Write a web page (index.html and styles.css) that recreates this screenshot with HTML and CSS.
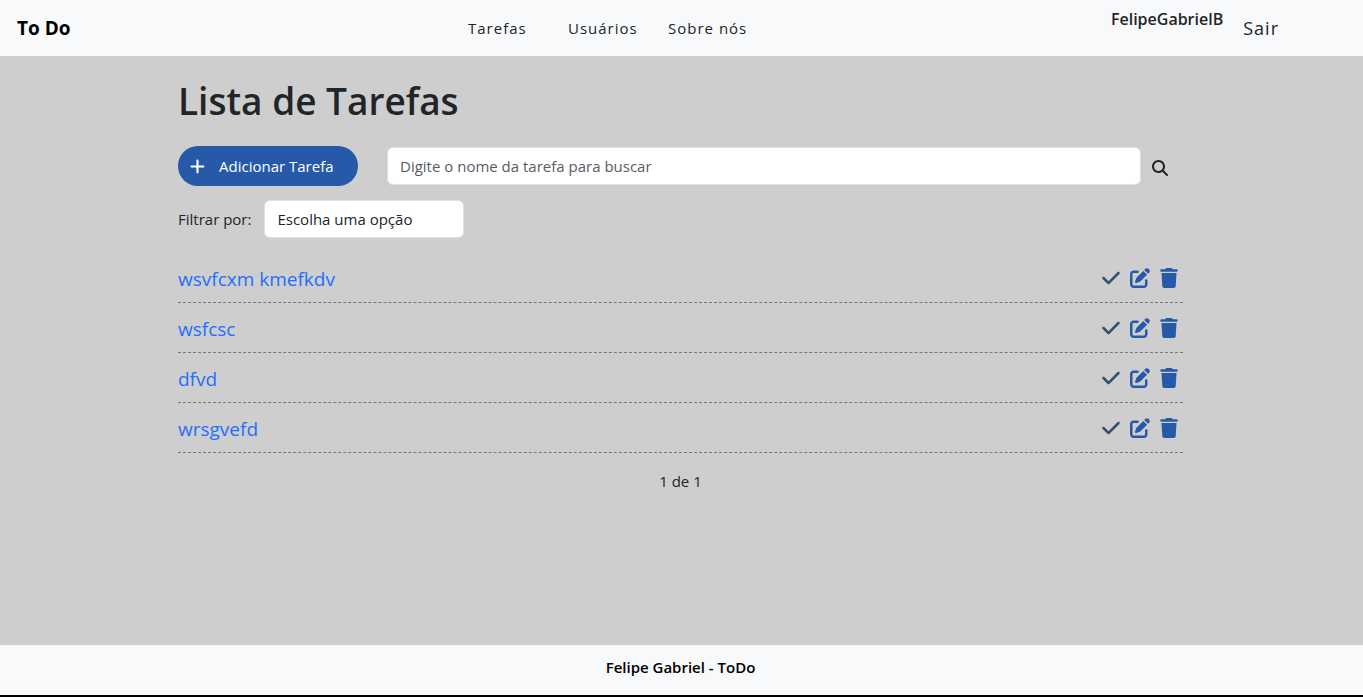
FILE: index.html
```html
<!DOCTYPE html>
<html lang="pt-BR">
<head>
<meta charset="utf-8">
<meta name="viewport" content="width=device-width, initial-scale=1">
<title>To Do</title>
<link rel="stylesheet" href="styles.css">
</head>
<body class="page">
<svg class="sprite" aria-hidden="true">
  <symbol id="check" viewBox="0 0 448 512"><path d="M438.600 105.400c12.500 12.500 12.500 32.800 0 45.300l-256 256c-12.500 12.500-32.800 12.500-45.300 0l-128-128c-12.500-12.500-12.500-32.800 0-45.300s32.800-12.500 45.300 0L160 338.700 393.400 105.400c12.500-12.500 32.800-12.500 45.300 0z"/></symbol>
  <symbol id="edit" viewBox="0 0 512 512"><path d="M471.600 21.700c-21.900-21.900-57.300-21.900-79.200 0L362.300 51.700l97.900 97.900 30.100-30.100c21.900-21.900 21.900-57.300 0-79.200L471.600 21.700zm-299.200 220c-6.100 6.100-10.800 13.600-13.500 21.900l-29.600 88.800c-2.900 8.600-.6 18.100 5.800 24.600s15.900 8.700 24.600 5.800l88.800-29.600c8.200-2.700 15.700-7.400 21.900-13.500L437.700 172.300 339.700 74.300 172.400 241.700zM96 64C43 64 0 107 0 160V416c0 53 43 96 96 96H352c53 0 96-43 96-96V320c0-17.700-14.300-32-32-32s-32 14.300-32 32v96c0 17.700-14.300 32-32 32H96c-17.700 0-32-14.300-32-32V160c0-17.700 14.300-32 32-32h96c17.700 0 32-14.300 32-32s-14.300-32-32-32H96z"/></symbol>
  <symbol id="trash" viewBox="0 0 448 512"><path d="M135.200 17.700L128 32H32C14.300 32 0 46.300 0 64S14.300 96 32 96H416c17.700 0 32-14.300 32-32s-14.300-32-32-32H320l-7.200-14.300C307.400 6.800 296.300 0 284.200 0H163.800c-12.100 0-23.200 6.800-28.600 17.700zM416 128H32L53.200 467c1.600 25.300 22.600 45 47.900 45H346.900c25.300 0 46.300-19.700 47.900-45L416 128z"/></symbol>
  <symbol id="search" viewBox="0 0 512 512"><path d="M416 208c0 45.900-14.900 88.300-40 122.700L502.600 457.400c12.500 12.500 12.500 32.800 0 45.300s-32.800 12.500-45.300 0L330.700 376c-34.400 25.200-76.800 40-122.700 40C93.100 416 0 322.900 0 208S93.100 0 208 0S416 93.100 416 208zM208 352a144 144 0 1 0 0-288 144 144 0 1 0 0 288z"/></symbol>
  <symbol id="plus" viewBox="0 0 448 512"><path d="M256 80c0-17.700-14.300-32-32-32s-32 14.300-32 32V224H48c-17.700 0-32 14.300-32 32s14.300 32 32 32H192V432c0 17.700 14.300 32 32 32s32-14.300 32-32V288H400c17.700 0 32-14.300 32-32s-14.300-32-32-32H256V80z"/></symbol>
</svg>

<header class="header">
  <a class="brand" href="#">To Do</a>
  <nav class="nav">
    <a class="nav-link" href="#">Tarefas</a>
    <a class="nav-link" href="#">Usuários</a>
    <a class="nav-link" href="#">Sobre nós</a>
  </nav>
  <div class="account">
    <span class="user">FelipeGabrielB</span>
    <a class="logout" href="#">Sair</a>
  </div>
</header>

<main class="main">
  <div class="container">
    <h1 class="title">Lista de Tarefas</h1>
    <div class="toolbar">
      <button class="add" type="button"><svg class="add-icon" aria-hidden="true"><use href="#plus"/></svg>Adicionar Tarefa</button>
      <form class="search">
        <input class="field search-field" type="text" aria-label="Buscar tarefa" placeholder="Digite o nome da tarefa para buscar">
        <button class="search-button" type="button" aria-label="Buscar"><svg class="search-icon"><use href="#search"/></svg></button>
      </form>
    </div>
    <div class="filter">
      <label for="filter">Filtrar por:</label>
      <select class="field filter-select" id="filter"><option>Escolha uma opção</option></select>
    </div>
    <ul class="tasks">
      <li class="task">
        <a class="task-name" href="#">wsvfcxm kmefkdv</a>
        <div class="actions">
          <button class="action done" type="button" aria-label="Concluir"><svg class="icon"><use href="#check"/></svg></button>
          <button class="action" type="button" aria-label="Editar"><svg class="icon"><use href="#edit"/></svg></button>
          <button class="action" type="button" aria-label="Excluir"><svg class="icon"><use href="#trash"/></svg></button>
        </div>
      </li>
      <li class="task">
        <a class="task-name" href="#">wsfcsc</a>
        <div class="actions">
          <button class="action done" type="button" aria-label="Concluir"><svg class="icon"><use href="#check"/></svg></button>
          <button class="action" type="button" aria-label="Editar"><svg class="icon"><use href="#edit"/></svg></button>
          <button class="action" type="button" aria-label="Excluir"><svg class="icon"><use href="#trash"/></svg></button>
        </div>
      </li>
      <li class="task">
        <a class="task-name" href="#">dfvd</a>
        <div class="actions">
          <button class="action done" type="button" aria-label="Concluir"><svg class="icon"><use href="#check"/></svg></button>
          <button class="action" type="button" aria-label="Editar"><svg class="icon"><use href="#edit"/></svg></button>
          <button class="action" type="button" aria-label="Excluir"><svg class="icon"><use href="#trash"/></svg></button>
        </div>
      </li>
      <li class="task">
        <a class="task-name" href="#">wrsgvefd</a>
        <div class="actions">
          <button class="action done" type="button" aria-label="Concluir"><svg class="icon"><use href="#check"/></svg></button>
          <button class="action" type="button" aria-label="Editar"><svg class="icon"><use href="#edit"/></svg></button>
          <button class="action" type="button" aria-label="Excluir"><svg class="icon"><use href="#trash"/></svg></button>
        </div>
      </li>
    </ul>
    <p class="pages">1 de 1</p>
  </div>
</main>

<footer class="footer">Felipe Gabriel - ToDo</footer>
</body>
</html>
```
FILE: styles.css
```css
* { box-sizing: border-box; }

.page {
  margin: 0;
  min-height: 100vh;
  display: flex;
  flex-direction: column;
  background: #cecece;
  color: #212529;
  font-family: "Segoe UI", "Open Sans", "Noto Sans", sans-serif;
  font-size: 15px;
  line-height: 24px;
}

a { color: inherit; text-decoration: none; }

button {
  border: 0;
  padding: 0;
  background: none;
  color: inherit;
  font: inherit;
  cursor: pointer;
}

svg { display: block; fill: currentColor; }

.sprite { display: none; }

.header {
  display: grid;
  grid-template-columns: 451px 1fr auto;
  align-items: center;
  min-height: 56px;
  padding: 0 84px 0 17px;
  background: #f8f9fb;
}

.brand {
  color: #000;
  font-size: 19px;
  font-weight: 700;
}

.nav {
  display: grid;
  grid-template-columns: repeat(3, 100px);
}

.nav-link, .logout { letter-spacing: 1px; }

.nav-link { white-space: nowrap; }

.account {
  display: flex;
  align-items: center;
  gap: 20px;
}

.user {
  padding-bottom: 18px;
  font-size: 16px;
  font-weight: 600;
}

.logout { font-size: 18px; }

.main {
  flex: 1;
  padding: 20px 18px 22px 16px;
}

.container {
  max-width: 1005px;
  margin: 0 auto;
}

.title {
  margin: 0 0 20px;
  font-size: 37px;
  font-weight: 600;
  line-height: 50px;
}

.toolbar {
  display: flex;
  align-items: center;
  gap: 29px;
}

.add {
  display: flex;
  align-items: center;
  gap: 14px;
  width: 180px;
  height: 40px;
  padding: 0 12px;
  border-radius: 20px;
  background: #265aa9;
  color: #fff;
  white-space: nowrap;
}

.add-icon { width: 15px; height: 17px; }

.search {
  flex: 1;
  display: flex;
  align-items: center;
  gap: 11px;
  padding-right: 15px;
}

.search-button { padding-top: 4px; }

.field {
  height: 38px;
  padding: 0 12px;
  border: 1px solid #dee2e6;
  border-radius: 6px;
  background: #fff;
  color: #212529;
  font: inherit;
  appearance: none;
}

.search-field { flex: 1; min-width: 0; }
.search-field::placeholder { color: #595c5f; opacity: 1; }

.search-icon { width: 16px; height: 16px; }

.filter {
  display: flex;
  align-items: center;
  gap: 13px;
  margin-top: 14px;
}

.filter-select { width: 200px; }

.tasks {
  margin: 15px 0 0;
  padding: 0;
  list-style: none;
}

.task {
  display: flex;
  align-items: center;
  justify-content: space-between;
  height: 50px;
  border-bottom: 1px dashed #777;
}

.task-name {
  padding-top: 2px;
  color: #1f6fff;
  font-size: 19px;
}

.actions {
  display: flex;
  gap: 9px;
  padding-right: 4px;
}

.action { color: #265aa9; }
.done { color: #35506f; }

.icon { width: 20px; height: 20px; }

.pages {
  margin: 16px 0 0;
  text-align: center;
}

.footer {
  min-height: 52px;
  padding: 10px 2px 16px 0;
  border-bottom: 2px solid #000;
  background: #f8f9fb;
  color: #000;
  font-weight: 600;
  text-align: center;
}
```
